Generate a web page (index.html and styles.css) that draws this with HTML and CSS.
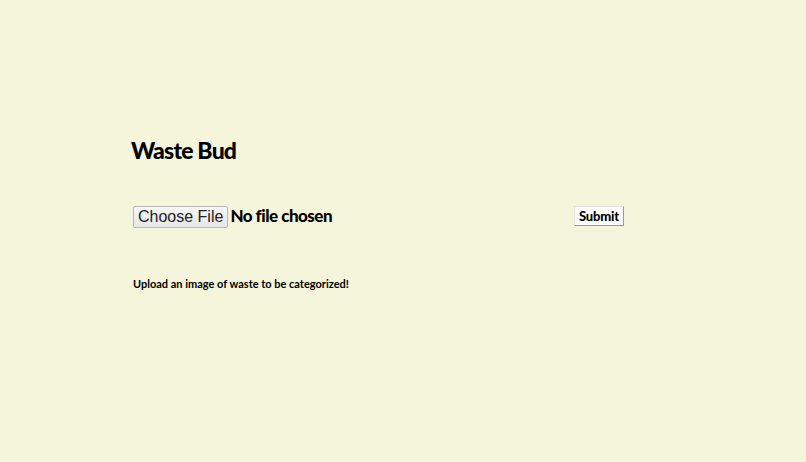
FILE: index.html
```html
<!DOCTYPE html>
<html lang="en">
<head>
<meta charset="utf-8">
<title>Waste Bud</title>
<link rel="stylesheet" href="styles.css">
</head>
<body>
<main class="page">
  <h1 class="title">Waste Bud</h1>
  <form class="upload-form">
    <input type="file" class="file-input" name="image">
    <button type="submit" class="submit-btn">Submit</button>
  </form>
  <p class="hint">Upload an image of waste to be categorized!</p>
</main>
</body>
</html>
```

FILE: styles.css
```css
html, body {
  margin: 0;
  padding: 0;
  background: #f5f5dc;
}

body {
  font-family: "Lato", "Liberation Sans", sans-serif;
  color: #000;
  width: 806px;
  height: 462px;
  overflow: hidden;
}

.page {
  padding: 135px 0 0 131px;
}

.title {
  margin: 0;
  font-size: 23px;
  font-weight: 900;
  line-height: 31px;
  letter-spacing: -0.8px;
}

.upload-form {
  display: flex;
  align-items: center;
  margin-top: 38px;
  height: 24px;
}

.file-input {
  width: 441px;
  margin: 0 0 0 2px;
  font-family: "Lato", "Liberation Sans", sans-serif;
  font-weight: 900;
  font-size: 17px;
  letter-spacing: -0.5px;
  color: #000;
}

.file-input::file-selector-button {
  font-family: "Liberation Sans", Arial, sans-serif;
  font-weight: 400;
  font-size: 16px;
  letter-spacing: 0;
  color: #222;
  height: 22px;
  padding: 0 4px;
  margin: 0 2px 0 0;
  border: 1px solid #b8b8b8;
  border-radius: 2px;
  background: linear-gradient(#f8f8f8, #e6e6e6);
}

.submit-btn {
  margin: -1px 0 0 0;
  height: 20px;
  padding: 0 4px;
  font-family: "Lato", "Liberation Sans", sans-serif;
  font-weight: 900;
  font-size: 13px;
  letter-spacing: -0.2px;
  color: #000;
  background: #fff;
  border: 1px solid #e0e0e0;
  border-right-color: #9a9a9a;
  border-bottom-color: #9a9a9a;
  border-radius: 0;
}

.hint {
  margin: 48px 0 0 2px;
  font-size: 11px;
  font-weight: 700;
  line-height: 16px;
}
```
